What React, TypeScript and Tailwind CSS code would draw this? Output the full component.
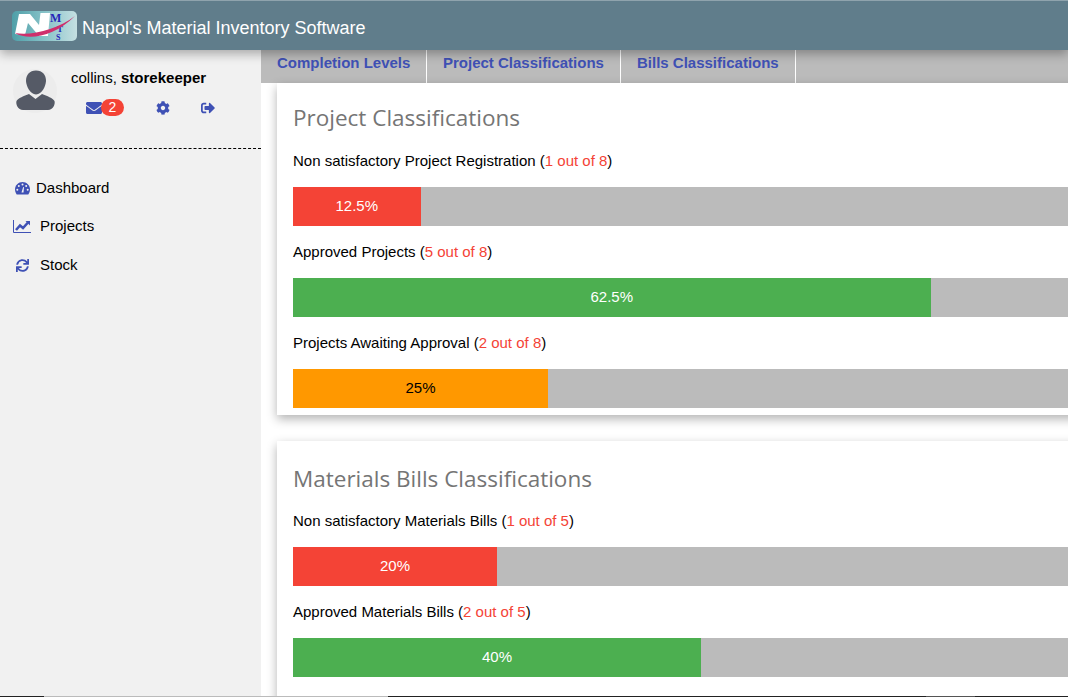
import { FaCog, FaEnvelope, FaSignOutAlt, FaSync } from 'react-icons/fa';

const tabs = [
  { label: 'Completion Levels', width: 'w-[166px]' },
  { label: 'Project Classifications', width: 'w-[194px]' },
  { label: 'Bills Classifications', width: 'w-[175px]' },
];

const projectRows = [
  { label: 'Non satisfactory Project Registration', count: '1 out of 8', pct: 12.5, text: '12.5%', color: 'bg-[#f44336] text-white' },
  { label: 'Approved Projects', count: '5 out of 8', pct: 62.5, text: '62.5%', color: 'bg-[#4caf50] text-white' },
  { label: 'Projects Awaiting Approval', count: '2 out of 8', pct: 25, text: '25%', color: 'bg-[#ff9800] text-black' },
];

const billRows = [
  { label: 'Non satisfactory Materials Bills', count: '1 out of 5', pct: 20, text: '20%', color: 'bg-[#f44336] text-white' },
  { label: 'Approved Materials Bills', count: '2 out of 5', pct: 40, text: '40%', color: 'bg-[#4caf50] text-white' },
];

function Logo() {
  return (
    <svg width="65" height="30" viewBox="0 0 65 30" className="shrink-0">
      <defs>
        <linearGradient id="logoBg" x1="0" x2="1" y1="0" y2="0">
          <stop offset="0" stopColor="#4f9fa8" />
          <stop offset="0.5" stopColor="#86c2c8" />
          <stop offset="1" stopColor="#c5e0e2" />
        </linearGradient>
      </defs>
      <rect width="65" height="30" rx="5" fill="url(#logoBg)" />
      <path d="M3 23 L7 3 L18 3 L27 14 L28.500 2 L38 2 L36 25 L27 25 L16 12 L13 24 Z" fill="#fff" />
      <text x="38" y="10.500" fontFamily="Liberation Serif, serif" fontSize="12" fontWeight="700" fill="#2626b8">M</text>
      <text x="45" y="20.500" fontFamily="Liberation Serif, serif" fontSize="9" fontWeight="700" fill="#2626b8">T</text>
      <text x="44" y="29" fontFamily="Liberation Serif, serif" fontSize="8" fontWeight="700" fill="#2626b8">S</text>
      <path d="M3 22 C16 30 42 26 63 5 C46 18 20 25 3 22 Z" fill="#cf2f6c" />
    </svg>
  );
}

function Avatar() {
  return (
    <div className="w-[44px] h-[44px] rounded-full bg-[#ececec] shrink-0">
      <svg width="44" height="44" viewBox="0 0 44 44">
        <path d="M23 1.500 C29.500 1.500 33 6 33 12 C32.500 18 29 25 23 25.500 C17 25 13.500 18 13 12 C13 6 16.500 1.500 23 1.500 Z" fill="#555a66" />
        <path d="M16 25 L22.500 30 L29 25 C34 27 40 29 41.500 32 C42.500 35 40 41 35 41 L10 41 C5 41 2.500 35 3.500 32 C5 29 11 27 16 25 Z" fill="#555a66" />
      </svg>
    </div>
  );
}

function GaugeIcon() {
  return (
    <svg width="15" height="13" viewBox="0 0 15 13" className="shrink-0">
      <path d="M7.500 0 C3.400 0 0 3.400 0 7.500 C0 9.300 .600 11 1.700 12.500 L13.300 12.500 C14.400 11 15 9.300 15 7.500 C15 3.400 11.600 0 7.500 0 Z" fill="#3f51b5" />
      <circle cx="7.500" cy="2.500" r="1" fill="#f1f1f1" />
      <circle cx="3.800" cy="4" r="1" fill="#f1f1f1" />
      <circle cx="11.200" cy="4" r="1" fill="#f1f1f1" />
      <circle cx="2.300" cy="7.800" r="1" fill="#f1f1f1" />
      <circle cx="12.700" cy="7.800" r="1" fill="#f1f1f1" />
      <path d="M6.500 10.500 L8.200 5 L9 5.200 L8.500 10.500 Z" fill="#f1f1f1" />
    </svg>
  );
}

function ChartIcon() {
  return (
    <svg width="18" height="13" viewBox="0 0 18 13" className="shrink-0">
      <path d="M.5 0 V12.500 H18" fill="none" stroke="#3f51b5" strokeWidth="1" />
      <path d="M3 10 L7 5.500 L10 8 L15 2.500" fill="none" stroke="#3f51b5" strokeWidth="2.600" />
      <path d="M12.500 1 H17 V5.500 Z" fill="#3f51b5" />
    </svg>
  );
}

function ProgressRow({ label, count, pct, text, color }: { label: string; count: string; pct: number; text: string; color: string }) {
  return (
    <div>
      <p className="h-[26px] mb-[13px] text-[15px] leading-[26px] text-black">
        {label} (<span className="text-[#f44336]">{count}</span>)
      </p>
      <div className="h-[39px] bg-[#bbbbbb]">
        <div className={`h-full flex items-center justify-center text-[15px] ${color}`} style={{ width: `${pct}%` }}>
          {text}
        </div>
      </div>
    </div>
  );
}

function Card({ title, rows, className }: { title: string; rows: typeof projectRows; className: string }) {
  return (
    <section className={`w-[1052px] shrink-0 bg-white px-4 shadow-[0_4px_10px_rgba(0,0,0,0.3)] ${className}`}>
      <h2 className="font-['Open_Sans',sans-serif] text-[22.5px] leading-[32px] text-[#757575] mb-[13px]">{title}</h2>
      <div className="flex flex-col gap-[13px]">
        {rows.map((row) => (
          <ProgressRow key={row.label} {...row} />
        ))}
      </div>
    </section>
  );
}

export default function App() {
  return (
    <div className="w-[1068px] h-[697px] overflow-hidden flex flex-col bg-white font-['Liberation_Sans',Arial,sans-serif]">
      <header className="relative z-10 h-[50px] shrink-0 flex items-center gap-[5px] pl-[12px] bg-[#607d8b] border-t border-t-[#8fa3ad] shadow-[0_4px_10px_rgba(0,0,0,0.3)]">
        <Logo />
        <h1 className="text-[18px] leading-[20px] mt-[5px] text-white">Napol's Material Inventory Software</h1>
      </header>

      <div className="flex flex-1 min-h-0">
        <aside className="w-[261px] shrink-0 bg-[#f1f1f1]">
          <div className="flex gap-[14px] pl-[13px] pt-[19px] h-[99px] border-b border-dashed border-b-black">
            <Avatar />
            <div>
              <p className="text-[15px] leading-[18px] text-black">
                collins, <b>storekeeper</b>
              </p>
              <div className="relative flex items-center h-[16px] mt-[13px] text-[#3f51b5]">
                <FaEnvelope className="ml-[15px] text-[16px]" />
                <span className="absolute left-[30px] -top-[1px] h-[17px] w-[23px] rounded-full bg-[#f44336] text-white text-[14px] leading-[17px] text-center">2</span>
                <FaCog className="ml-[54px] text-[14px]" />
                <FaSignOutAlt className="ml-[31px] text-[14px]" />
              </div>
            </div>
          </div>
          <nav className="pt-[20px] text-[15px] text-black">
            <div className="flex items-center h-[39px] pl-[15px] gap-[6px]"><GaugeIcon />Dashboard</div>
            <div className="flex items-center h-[37px] pl-[13px] gap-[9px]"><ChartIcon />Projects</div>
            <div className="flex items-center h-[41px] pl-[16px] gap-[11px]"><FaSync className="text-[#3f51b5] text-[13px]" />Stock</div>
          </nav>
        </aside>

        <main className="flex-1 min-w-0 overflow-hidden">
          <nav className="flex h-[33px] bg-[#bbbbbb]">
            {tabs.map((tab) => (
              <div key={tab.label} className={`${tab.width} pl-4 border-r border-r-white text-[15px] font-bold leading-[26px] text-[#3f51b5]`}>
                {tab.label}
              </div>
            ))}
          </nav>
          <div className="pl-4 flex flex-col">
            <Card title="Project Classifications" rows={projectRows} className="h-[332px] pt-[19px] [&>h2]:mb-[14px]" />
            <Card title="Materials Bills Classifications" rows={billRows} className="h-[300px] mt-[26px] pt-[22px]" />
          </div>
        </main>
      </div>

      <div className="relative z-20 -mt-[1px] h-[1px] shrink-0 flex bg-[#222222]">
        <div className="ml-[44px] w-[344px] bg-[#bbbbbb]" />
        <div className="ml-[538px] w-[49px] bg-[#555555]" />
      </div>
    </div>
  );
}
